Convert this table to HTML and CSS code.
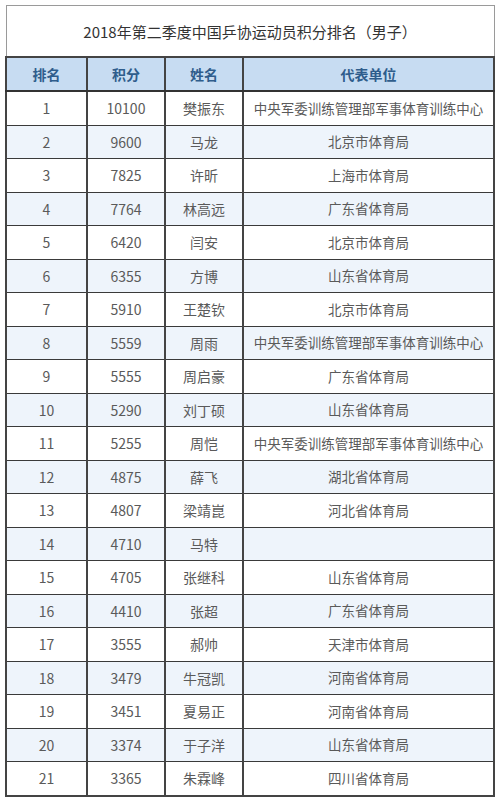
FILE: index.html
```html
<!DOCTYPE html>
<html lang="zh">
<head>
<meta charset="utf-8">
<link rel="stylesheet" href="styles.css">
</head>
<body>
<table class="rank">
  <colgroup>
    <col class="c1"><col class="c2"><col class="c3"><col class="c4">
  </colgroup>
  <thead>
    <tr class="title-row"><th colspan="4">2018年第二季度中国乒协运动员积分排名（男子）</th></tr>
    <tr class="head-row"><th>排名</th><th>积分</th><th>姓名</th><th>代表单位</th></tr>
  </thead>
  <tbody>
    <tr><td>1</td><td>10100</td><td>樊振东</td><td>中央军委训练管理部军事体育训练中心</td></tr>
    <tr><td>2</td><td>9600</td><td>马龙</td><td>北京市体育局</td></tr>
    <tr><td>3</td><td>7825</td><td>许昕</td><td>上海市体育局</td></tr>
    <tr><td>4</td><td>7764</td><td>林高远</td><td>广东省体育局</td></tr>
    <tr><td>5</td><td>6420</td><td>闫安</td><td>北京市体育局</td></tr>
    <tr><td>6</td><td>6355</td><td>方博</td><td>山东省体育局</td></tr>
    <tr><td>7</td><td>5910</td><td>王楚钦</td><td>北京市体育局</td></tr>
    <tr><td>8</td><td>5559</td><td>周雨</td><td>中央军委训练管理部军事体育训练中心</td></tr>
    <tr><td>9</td><td>5555</td><td>周启豪</td><td>广东省体育局</td></tr>
    <tr><td>10</td><td>5290</td><td>刘丁硕</td><td>山东省体育局</td></tr>
    <tr><td>11</td><td>5255</td><td>周恺</td><td>中央军委训练管理部军事体育训练中心</td></tr>
    <tr><td>12</td><td>4875</td><td>薛飞</td><td>湖北省体育局</td></tr>
    <tr><td>13</td><td>4807</td><td>梁靖崑</td><td>河北省体育局</td></tr>
    <tr><td>14</td><td>4710</td><td>马特</td><td></td></tr>
    <tr><td>15</td><td>4705</td><td>张继科</td><td>山东省体育局</td></tr>
    <tr><td>16</td><td>4410</td><td>张超</td><td>广东省体育局</td></tr>
    <tr><td>17</td><td>3555</td><td>郝帅</td><td>天津市体育局</td></tr>
    <tr><td>18</td><td>3479</td><td>牛冠凯</td><td>河南省体育局</td></tr>
    <tr><td>19</td><td>3451</td><td>夏易正</td><td>河南省体育局</td></tr>
    <tr><td>20</td><td>3374</td><td>于子洋</td><td>山东省体育局</td></tr>
    <tr><td>21</td><td>3365</td><td>朱霖峰</td><td>四川省体育局</td></tr>
  </tbody>
</table>
</body>
</html>
```

FILE: styles.css
```css
html, body {
  margin: 0;
  padding: 0;
  background: #ffffff;
}
body {
  padding: 5px 0 0 5px;
  font-family: "Noto Sans CJK SC", "Noto Sans", sans-serif;
  color: #555555;
}
.rank {
  border-collapse: collapse;
  table-layout: fixed;
  width: 488px;
}
.c1 { width: 81px; }
.c2 { width: 78px; }
.c3 { width: 78px; }
.c4 { width: 251px; }

.title-row th {
  height: 50px;
  padding: 0;
  font-size: 15px;
  font-weight: normal;
  color: #333333;
  border: 1px solid #9a9a9a;
  border-bottom: 2px solid #444444;
  background: #ffffff;
}
.head-row th {
  height: 32px;
  padding: 0;
  font-size: 14px;
  font-weight: bold;
  color: #2f5d8c;
  background: #c7dcf2;
  border-left: 2px solid #444444;
  border-right: 2px solid #444444;
  border-bottom: 2px solid #333333;
}
.rank td {
  height: 32.5px;
  padding: 0;
  text-align: center;
  font-size: 14px;
  line-height: 1;
  color: #5a5a5a;
  border-left: 2px solid #444444;
  border-right: 2px solid #444444;
  border-bottom: 1px solid #3a3a3a;
  white-space: nowrap;
  overflow: hidden;
}
.rank td:nth-child(4) {
  font-size: 13.5px;
}
.rank tbody tr:nth-child(even) td {
  background: #eef4fb;
}
.rank tbody tr:last-child td {
  border-bottom: 2px solid #444444;
}
```
